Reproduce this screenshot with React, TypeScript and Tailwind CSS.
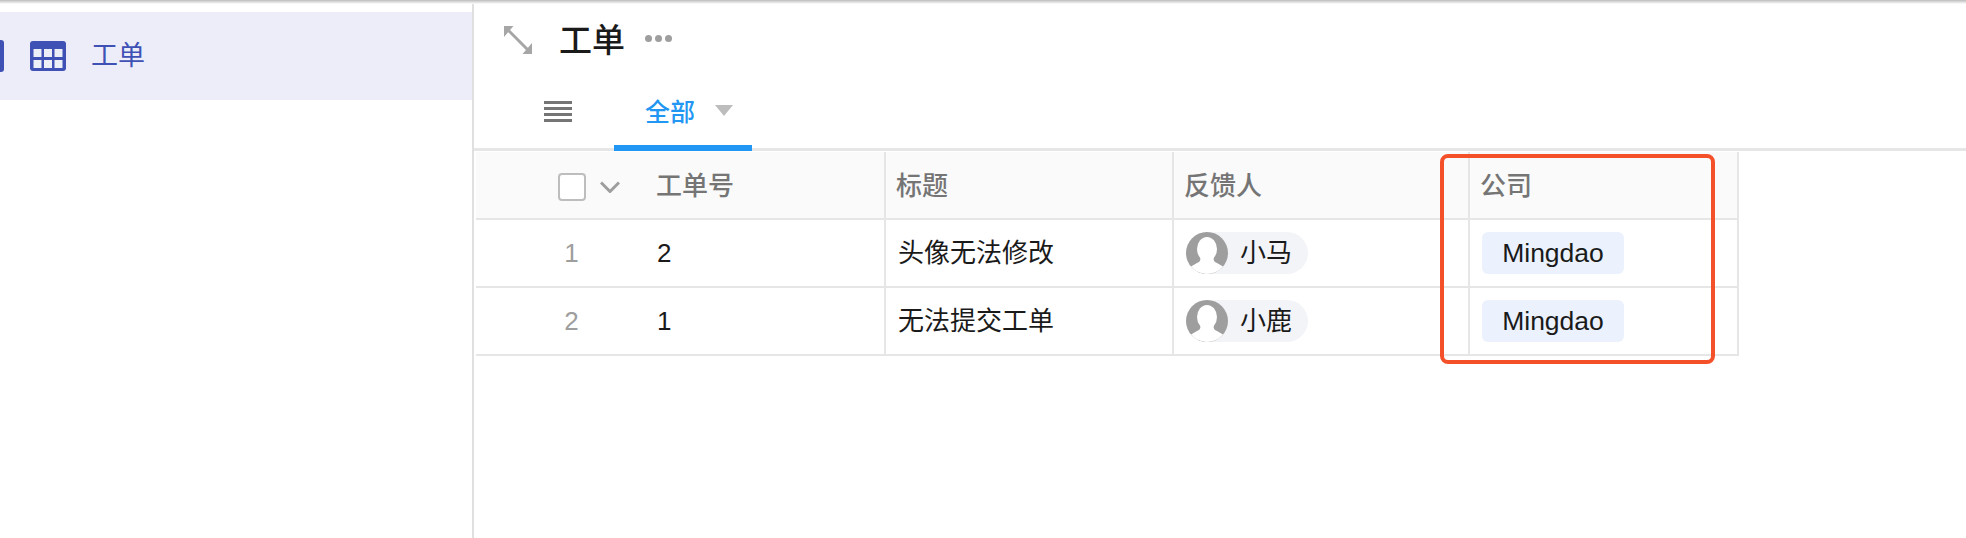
const font = '[font-family:"Liberation_Sans","Noto_Sans_CJK_SC",sans-serif]';

const TableIcon = () => (
  <svg width="36" height="30" viewBox="0 0 36 30">
    <rect width="36" height="30" rx="3" fill="#3f51b5" />
    <g fill="#eceef8">
      <rect x="3.500" y="8" width="8" height="8" />
      <rect x="14" y="8" width="8" height="8" />
      <rect x="24.500" y="8" width="8" height="8" />
      <rect x="3.500" y="19" width="8" height="8" />
      <rect x="14" y="19" width="8" height="8" />
      <rect x="24.500" y="19" width="8" height="8" />
    </g>
  </svg>
);

const ExpandIcon = () => (
  <svg width="28" height="28" viewBox="0 0 28 28">
    <path d="M4 4l20 20" stroke="#a6a6a6" strokeWidth="3" fill="none" />
    <path d="M0 0h9.500L0 11z" fill="#a6a6a6" />
    <path d="M28 28h-9.500L28 17z" fill="#a6a6a6" />
  </svg>
);

const ListIcon = () => (
  <div className="flex w-[28px] flex-col gap-[3px]">
    <div className="h-[3px] bg-[#757575]" />
    <div className="h-[3px] bg-[#757575]" />
    <div className="h-[3px] bg-[#757575]" />
    <div className="h-[3px] bg-[#757575]" />
  </div>
);

const Avatar = () => (
  <svg width="42" height="42" viewBox="0 0 42 42" className="shrink-0">
    <circle cx="21" cy="21" r="21" fill="#9e9e9e" />
    <ellipse cx="21" cy="17" rx="10" ry="12" fill="#fff" />
    <path d="M14 25c1 3 0 5-3 6l-6 3.500A21 21 0 0 0 37 34.500L31 31c-3-1-4-3-3-6z" fill="#fff" />
  </svg>
);

const cell = 'flex items-center border-r-2 border-b-2 border-[#e6e6e6]';
const head = `${cell} h-[68px] bg-[#fafafa] pt-[3px] text-[26px] font-medium text-[#757575]`;
const body = `${cell} h-[68px] text-[26px] text-[#1a1a1a]`;

const rows = [
  { index: 1, no: '2', title: '头像无法修改', user: '小马' },
  { index: 2, no: '1', title: '无法提交工单', user: '小鹿' },
];

export default function App() {
  return (
    <div className={`${font} relative flex h-[538px] w-[1966px] overflow-hidden bg-white`}>
      {/* 顶部阴影 */}
      <div className="absolute inset-x-0 top-0 h-[4px] bg-gradient-to-b from-[#bcbcbc] to-white" />

      {/* 左侧导航 */}
      <aside className="w-[474px] shrink-0 border-r-2 border-[#e0e0e0] pt-[12px]">
        <div className="flex h-[88px] items-center bg-[#ecedf8]">
          <div className="h-[32px] w-[4px] rounded-r-[3px] bg-[#3f51b5]" />
          <div className="ml-[26px]">
            <TableIcon />
          </div>
          <span className="mt-[1px] ml-[25px] text-[27px] text-[#3f51b5]">工单</span>
        </div>
      </aside>

      <main className="flex min-w-0 flex-1 flex-col">
        {/* 标题栏 */}
        <div className="flex h-[80px] items-center pl-[30px]">
          <ExpandIcon />
          <span className="mt-[2px] ml-[27px] text-[33px] font-medium text-[#1a1a1a]">工单</span>
          <div className="-mt-[3px] ml-[20px] flex gap-[3px]">
            <div className="h-[7px] w-[7px] rounded-full bg-[#9e9e9e]" />
            <div className="h-[7px] w-[7px] rounded-full bg-[#9e9e9e]" />
            <div className="h-[7px] w-[7px] rounded-full bg-[#9e9e9e]" />
          </div>
        </div>

        {/* 视图标签 */}
        <div className="flex h-[71px] border-b-[3px] border-[#e6e6e6] pl-[70px]">
          <div className="flex h-[62px] items-center">
            <ListIcon />
          </div>
          <div className="relative -mb-[3px] ml-[42px] flex h-[71px] w-[138px] items-start border-b-[6px] border-[#2196f3] pt-[14px] pl-[31px]">
            <span className="text-[25px] font-medium text-[#2196f3]">全部</span>
            <div className="mt-[11px] ml-[20px] h-0 w-0 border-x-[9px] border-t-[11px] border-x-transparent border-t-[#bdbdbd]" />
          </div>
        </div>

        {/* 表格 */}
        <div className="mt-px grid w-[1266px] grid-cols-[410px_288px_296px_269px] pl-[2px]">
          <div className={head}>
            <div className="ml-[82px] h-[28px] w-[28px] rounded-[4px] border-2 border-[#bdbdbd] bg-white" />
            <svg width="20" height="12" viewBox="0 0 20 12" className="ml-[14px]" fill="none" stroke="#9e9e9e" strokeWidth="3">
              <path d="M1 1.500l9 9 9-9" />
            </svg>
            <span className="ml-[36px]">工单号</span>
          </div>
          <div className={`${head} pl-[10px]`}>标题</div>
          <div className={`${head} pl-[10px]`}>反馈人</div>
          <div className={`${head} pl-[10px]`}>公司</div>

          {rows.map((r) => (
            <div key={r.index} className="contents">
              <div className={body}>
                <span className="mt-px w-[181px] pl-[10px] text-center text-[#9e9e9e]">{r.index}</span>
                <span className="mt-px">{r.no}</span>
              </div>
              <div className={`${body} pl-[12px]`}>
                <span className="mt-px">{r.title}</span>
              </div>
              <div className={`${body} pl-[12px]`}>
                <div className="flex h-[42px] w-[122px] items-center rounded-full bg-[#f3f4f8]">
                  <Avatar />
                  <span className="mt-px ml-[12px]">{r.user}</span>
                </div>
              </div>
              <div className={`${body} pl-[12px]`}>
                <div className="flex h-[42px] w-[142px] items-center justify-center rounded-[6px] bg-[#ebf2fd] text-[26.500px]">
                  <span className="mt-px">Mingdao</span>
                </div>
              </div>
            </div>
          ))}
        </div>
      </main>

      {/* 红色标注框 */}
      <div className="absolute top-[154px] left-[1440px] h-[210px] w-[275px] rounded-[8px] border-4 border-[#f4502a]" />
    </div>
  );
}
